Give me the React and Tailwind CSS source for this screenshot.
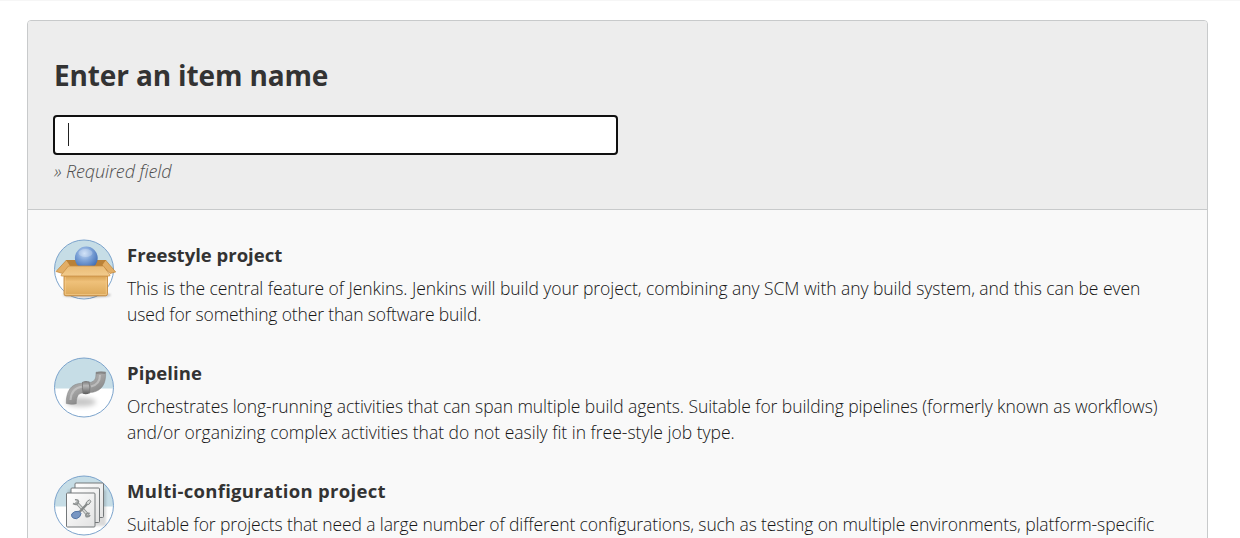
import React from "react";

function Disc({ id, children }) {
  return (
    <svg viewBox="0 0 72 72" className="-mx-1.5 -mt-[6.5px] -mb-1.5 h-[72px] w-[72px] shrink-0 overflow-visible">
      <defs>
        <clipPath id={id}>
          <circle cx="36" cy="36.5" r="29.5" />
        </clipPath>
      </defs>
      <circle cx="36" cy="36.5" r="29.5" fill="#fff" />
      <rect x="6" y="6" width="60" height="31.5" fill="#c6dde6" clipPath={`url(#${id})`} />
      <circle cx="36" cy="36.5" r="29.5" fill="none" stroke="#7ba3cc" strokeWidth="1" />
      {children}
    </svg>
  );
}

function BoxIcon() {
  return (
    <Disc id="disc-box">
      <defs>
        <radialGradient id="ball" cx="0.42" cy="0.3" r="0.7">
          <stop offset="0" stopColor="#c4daf6" />
          <stop offset="0.45" stopColor="#7fa4d8" />
          <stop offset="1" stopColor="#3f6cb3" />
        </radialGradient>
        <linearGradient id="front" x1="0" y1="0" x2="0" y2="1">
          <stop offset="0" stopColor="#cf9745" />
          <stop offset="0.35" stopColor="#efc17a" />
          <stop offset="1" stopColor="#dca858" />
        </linearGradient>
        <linearGradient id="flap" x1="0" y1="0" x2="0" y2="1">
          <stop offset="0" stopColor="#e9bb76" />
          <stop offset="1" stopColor="#f2cb8c" />
        </linearGradient>
        <filter id="box-soft" x="-20%" y="-50%" width="140%" height="200%">
          <feGaussianBlur stdDeviation="1.2" />
        </filter>
      </defs>
      <ellipse cx="39" cy="62" rx="24" ry="2.5" fill="#000" opacity="0.25" filter="url(#box-soft)" />
      <path d="M18 27 L58 27 L59 38 L18 38Z" fill="#b98138" />
      <path d="M18.5 27 L8 38.5 L14.5 40.5 L22.5 33Z" fill="#e2ae66" stroke="#b87929" strokeWidth="0.6" />
      <path d="M57.5 27 L67.7 39 L62 40.5 L54 32Z" fill="#e2ae66" stroke="#b87929" strokeWidth="0.6" />
      <circle cx="38.3" cy="25" r="11.4" fill="url(#ball)" />
      <ellipse cx="37.5" cy="20" rx="7" ry="4" fill="#fff" opacity="0.24" />
      <path d="M16 41 H59.5 V60.8 Q59.5 62.8 57.5 62.8 H18 Q16 62.8 16 60.8Z" fill="url(#front)" stroke="#c58b40" strokeWidth="0.9" />
      <path d="M17.3 44 V61.5 H58.3 V44" fill="none" stroke="#f4ce91" strokeWidth="0.8" opacity="0.8" />
      <path d="M20.5 33 H55.5 L62 42 Q62.3 43 61 43 H14 Q12.5 43 13.3 41.8Z" fill="url(#flap)" stroke="#c58b40" strokeWidth="0.7" />
    </Disc>
  );
}

function PipeIcon() {
  return (
    <Disc id="disc-pipe">
      <defs>
        <linearGradient id="pipe" x1="0" y1="0" x2="0.7" y2="1">
          <stop offset="0" stopColor="#808080" />
          <stop offset="0.45" stopColor="#a8a8a8" />
          <stop offset="1" stopColor="#777" />
        </linearGradient>
        <linearGradient id="collar" x1="0" y1="0" x2="0" y2="1">
          <stop offset="0" stopColor="#777" />
          <stop offset="0.35" stopColor="#b8b8b8" />
          <stop offset="1" stopColor="#5c5c5c" />
        </linearGradient>
        <filter id="pipe-soft" x="-30%" y="-50%" width="160%" height="200%">
          <feGaussianBlur stdDeviation="2.5" />
        </filter>
        <filter id="shine-soft" x="-20%" y="-20%" width="140%" height="140%">
          <feGaussianBlur stdDeviation="0.7" />
        </filter>
      </defs>
      <ellipse cx="33" cy="51" rx="15" ry="4.5" fill="#000" opacity="0.22" filter="url(#pipe-soft)" />
      <path d="M18.3 52.5 C18 40 23 32.5 34 32.2 L42 31.5 C47.5 30 48 27.5 48 21.2 L57.6 21 C58.3 33 53.5 39.5 45 41.2 L35 42 C30.5 42 28.3 45 28.3 52.8 Q23 54 18.3 52.5Z" fill="url(#pipe)" stroke="#808080" strokeWidth="0.5" />
      <path d="M22.5 49 C23 39.5 28 36.5 34 35.8 M43 35.5 C49 34 52 31 52 24" fill="none" stroke="#d2d2d2" strokeWidth="2" opacity="0.6" filter="url(#shine-soft)" />
      <path d="M48 21.3 Q52.5 19.7 57.5 21 L57.2 23 Q52 22 48 23Z" fill="#858585" />
      <path d="M34.3 31 Q37.8 29.3 41.3 30.8 L42 42 Q38.3 44 35 42.8Z" fill="url(#collar)" />
      <path d="M34.6 31 Q34 36.5 35.1 42.6 M40.9 30.5 Q42.3 36 41.6 42.3" fill="none" stroke="#777" strokeWidth="0.8" />
    </Disc>
  );
}

function MatrixIcon() {
  return (
    <Disc id="disc-matrix">
      <defs>
        <linearGradient id="sheet" x1="0" y1="0" x2="1" y2="1">
          <stop offset="0" stopColor="#fff" />
          <stop offset="1" stopColor="#e2e2e2" />
        </linearGradient>
        <filter id="sheet-soft" x="-20%" y="-20%" width="140%" height="140%">
          <feGaussianBlur stdDeviation="1" />
        </filter>
      </defs>
      <rect x="20" y="21" width="38" height="36" fill="#000" opacity="0.14" filter="url(#sheet-soft)" />
      <g fill="url(#sheet)" stroke="#74787a" strokeWidth="1">
        <rect x="27" y="14" width="28.5" height="34.5" rx="1" />
        <rect x="23" y="19" width="28.5" height="34.5" rx="1" />
        <rect x="18.5" y="24" width="28.5" height="34" rx="1" />
      </g>
      <path d="M29 34 L39.5 45.5" stroke="#8d9191" strokeWidth="3.2" strokeLinecap="round" />
      <path d="M29 34 L39.5 45.5" stroke="#d5d8d6" strokeWidth="1.6" strokeLinecap="round" />
      <path d="M25 34.5 Q30 37 30.5 32.5 Q30 30.3 27 30.8 M37.8 47.5 Q37.5 43.5 41.8 44.5 M37.8 47.5 Q41 48.5 42 46" fill="none" stroke="#8d9191" strokeWidth="1.6" />
      <path d="M31.5 43 L39.5 34.5" stroke="#858989" strokeWidth="2.4" />
      <path d="M38 35 L38.5 33 L41.3 30.8 L43 32.3 L40.8 35.5Z" fill="#d7dad9" stroke="#858989" strokeWidth="1" />
      <path d="M23.7 45 Q26 41.7 31 42.3 L33 44.5 Q32.7 48.3 28.5 49.7 Q24.5 49.8 23.7 47.3Z" fill="#7896c2" stroke="#4b6d9f" strokeWidth="0.9" />
    </Disc>
  );
}

function Item({ icon, title, children }) {
  return (
    <li className="flex h-[118px] items-start gap-[13px]">
      {icon}
      <div className="pt-[4px]">
        <h2 className="h-[27px] text-[18.5px] leading-[24px] font-bold whitespace-nowrap">{title}</h2>
        <div className="pt-[5px] text-[17.5px] leading-[26px] font-light whitespace-nowrap text-[#151515]">{children}</div>
      </div>
    </li>
  );
}

export default function App() {
  return (
    <div className="h-[538px] overflow-hidden border-t border-[#f6f6f6] bg-white px-[27px] pt-[19px] font-['Open_Sans','Noto_Sans',sans-serif] text-[#333]">
      <main className="h-[620px] w-[1181px] rounded-[4px] border border-[#c8cacb] bg-[#f9f9f9]">
        <section className="h-[189px] rounded-t-[3px] border-b border-[#c8cacb] bg-[#ededed] px-[25px] pt-[35px]">
          <h1 className="h-[59px] pl-px text-[28px] leading-[38px] font-bold"><span className="tracking-[-0.14px]">Enter an item name</span></h1>
          <div className="flex h-[40px] w-[565px] items-center rounded-[4px] border-2 border-[#101010] bg-white pb-px pl-[13px]">
            <span className="h-[23px] w-px bg-[#222]" />
          </div>
          <p className="pt-[4px] pl-px text-[18px] leading-[24px] font-light text-[#4c4c4c] italic"><span className="tracking-[-0.08px]">» Required field</span></p>
        </section>
        <ul className="px-[26px] pt-[29px]">
          <Item icon={<BoxIcon />} title={<span>Freestyle project</span>}>
            <p><span className="tracking-[-0.055px]">This is the central feature of Jenkins. Jenkins will build your project, combining any SCM with any build system, and this can be even</span></p>
            <p><span className="tracking-[-0.15px]">used for something other than software build.</span></p>
          </Item>
          <Item icon={<PipeIcon />} title={<span className="tracking-[0.1px]">Pipeline</span>}>
            <p><span className="tracking-[-0.075px]">Orchestrates long-running activities that can span multiple build agents. Suitable for building pipelines (formerly known as workflows)</span></p>
            <p><span className="tracking-[-0.01px]">and/or organizing complex activities that do not easily fit in free-style job type.</span></p>
          </Item>
          <Item icon={<MatrixIcon />} title={<span className="tracking-[0.3px]">Multi-configuration project</span>}>
            <p><span className="tracking-[-0.107px]">Suitable for projects that need a large number of different configurations, such as testing on multiple environments, platform-specific</span></p>
          </Item>
        </ul>
      </main>
    </div>
  );
}
